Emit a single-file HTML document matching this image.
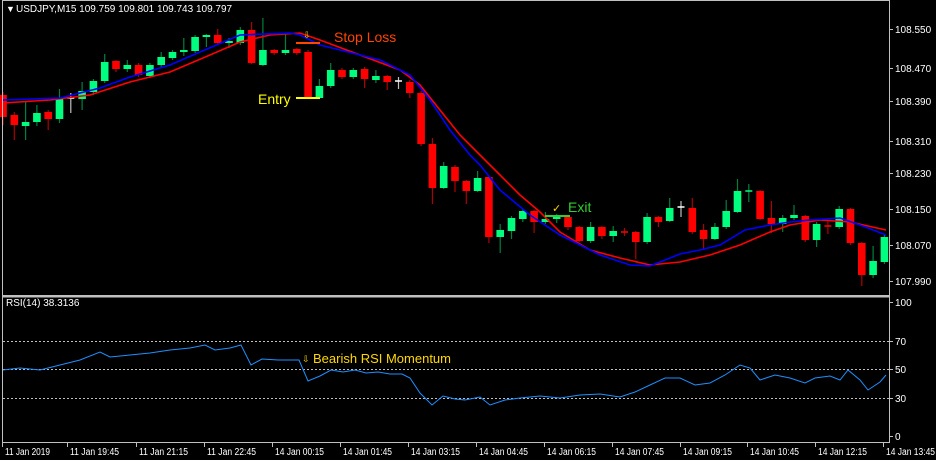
<!DOCTYPE html>
<html><head><meta charset="utf-8"><style>
html,body{margin:0;padding:0;background:#000;width:936px;height:460px;overflow:hidden}
svg{display:block}
text{font-family:"Liberation Sans",sans-serif;font-size:10px;fill:#fff}
</style></head><body>
<svg id="s" width="936" height="460" xmlns="http://www.w3.org/2000/svg">
<rect width="936" height="460" fill="#000"/>
<g id="c"></g>
<polyline fill="none" stroke="#ff0000" stroke-width="1.6" points="3,103 50,100 90,95 130,82 170,72 210,55 240,42 270,35 300,33 320,40 360,55 400,70 420,85 440,110 460,135 480,155 500,175 520,195 540,212 560,232 590,250 620,258 650,265 680,262 710,255 740,245 770,232 790,225 820,220 850,222 886,230"/>
<polyline fill="none" stroke="#0000ff" stroke-width="1.6" points="3,100 60,98 100,88 130,77 170,65 200,52 240,35 290,33 300,35 320,45 380,60 410,75 430,100 450,130 470,155 480,165 500,190 530,215 560,235 600,255 630,265 650,266 680,254 700,250 720,245 745,230 770,225 790,222 810,220 840,218 860,225 886,235"/>
<line x1="296" y1="43" x2="320" y2="43" stroke="#ff4500" stroke-width="2"/>
<line x1="296" y1="98" x2="320" y2="98" stroke="#ffff00" stroke-width="2"/>
<line x1="545" y1="216" x2="570" y2="216" stroke="#32cd32" stroke-width="2"/>
<text x="303" y="38" style="fill:#ffd700;font-size:9px">⇩</text>
<text x="334" y="42" style="fill:#ff4500;font-size:14px">Stop Loss</text>
<text x="258" y="104" style="fill:#ffff00;font-size:14px">Entry</text>
<text x="552" y="212" style="fill:#ffd700;font-size:11px">✓</text>
<text x="568" y="212" style="fill:#32cd32;font-size:14px">Exit</text>
<rect x="2.5" y="0.5" width="887" height="295" fill="none" stroke="#c0c0c0"/>
<line x1="2" y1="296.5" x2="890" y2="296.5" stroke="#c0c0c0" stroke-width="2"/>
<line x1="889.5" y1="0" x2="889.5" y2="443" stroke="#c0c0c0"/>
<line x1="2" y1="442.5" x2="890" y2="442.5" stroke="#c0c0c0"/>
<line x1="2.5" y1="296" x2="2.5" y2="443" stroke="#c0c0c0"/>
<text x="6" y="12" style="font-size:9px">▼</text>
<text x="16" y="12">USDJPY,M15  109.759 109.801 109.743 109.797</text>
<text x="6" y="306">RSI(14) 38.3136</text>
<g stroke="#c0c0c0" stroke-dasharray="2,2">
<line x1="3" y1="341.5" x2="889" y2="341.5"/><line x1="3" y1="369.5" x2="889" y2="369.5"/><line x1="3" y1="398.5" x2="889" y2="398.5"/>
</g>
<polyline fill="none" stroke="#1e90ff" stroke-width="1" points="3,370 20,368 40,370 60,365 80,360 100,352 110,357 130,355 150,353 170,350 190,348 205,345 215,350 230,348 241,345 251,365 262,359 278,360 299,360 308,381 320,376 331,370 343,372 355,370 366,373 378,372 390,374 402,374 410,378 420,393 432,405 443,396 455,399 465,400 480,397 490,405 505,400 520,398 540,396 560,398 580,395 600,394 620,397 635,392 650,385 665,378 680,378 695,385 710,383 725,375 740,365 750,368 760,380 775,375 790,378 805,383 815,378 830,376 840,380 848,370 860,380 868,390 880,382 886,375"/>
<text x="302" y="362" style="fill:#ffd700;font-size:9px">⇩</text>
<text x="313" y="363" style="fill:#ffd700;font-size:13px">Bearish RSI Momentum</text>
<g id="ax"></g>
</svg>
<script>
var C=[["r",95,117,92,125],["r",115,125,112,140],["g",122,126,102,140],["g",113,122,105,126],["r",112,119,110,130],["g",99,119,89,123],["w",98,98,93,113],["g",91,99,82,110],["g",81,92,79,95],["g",62,81,54,83],["r",61,69,60,72],["g",65,69,60,72],["r",65,75,63,77],["g",65,76,63,78],["g",57,65,52,67],["g",52,58,50,60],["g",50,52,38,56],["g",37,51,35,53],["g",35,37,34,47],["r",35,43,29,45],["g",41,43,38,48],["g",30,43,27,45],["r",30,63,22,64],["g",50,65,18,66],["r",50,53,49,55],["g",50,53,34,55],["r",49,53,48,55],["r",52,98,50,99],["g",86,98,79,99],["g",70,86,63,88],["r",70,77,68,79],["g",70,77,68,79],["r",69,79,67,88],["g",76,80,70,83],["r",76,82,75,90],["w",81,81,77,89],["r",82,93,80,98],["r",93,144,91,146],["r",144,188,138,204],["g",166,188,162,189],["r",167,181,165,192],["r",181,191,180,204],["g",178,191,171,192],["r",177,237,176,243],["g",230,237,224,253],["g",218,231,216,239],["g",211,219,209,222],["r",211,222,210,233],["g",219,222,212,224],["g",217,219,214,223],["r",217,227,216,230],["r",227,241,226,242],["g",227,241,222,243],["r",227,236,226,239],["g",231,236,226,242],["r",232,232,228,236],["r",232,242,231,259],["g",217,242,213,244],["r",217,222,216,227],["g",208,221,198,222],["w",207,207,201,217],["r",208,232,198,234],["r",230,239,224,250],["g",227,239,223,240],["g",211,227,200,229],["g",191,212,179,213],["g",191,191,184,202],["r",191,219,190,220],["r",218,224,201,233],["g",218,224,215,232],["g",215,218,205,220],["r",216,240,215,242],["g",224,240,222,247],["r",226,226,220,234],["g",209,227,206,229],["r",209,243,208,245],["r",243,275,242,286],["g",261,275,246,278],["g",237,262,235,264]];
var col={r:"#ff0000",g:"#00ff7f",w:"#ffffff"},wk={r:"#b00000",g:"#008040",w:"#c0c0c0"};
var h="";
C.forEach(function(c,i){var x=3+11.3*i,t=c[0];
 h+='<line x1="'+x+'" y1="'+c[3]+'" x2="'+x+'" y2="'+c[4]+'" stroke="'+wk[t]+'" stroke-width="1.2"/>';
 var bh=Math.max(c[2]-c[1],1.5);
 if(c[2]-c[1]<1) h+='<line x1="'+(x-3.5)+'" y1="'+c[1]+'" x2="'+(x+3.5)+'" y2="'+c[1]+'" stroke="'+col[t]+'" stroke-width="1.5"/>';
 else h+='<rect x="'+(x-3.8)+'" y="'+c[1]+'" width="7.6" height="'+bh+'" fill="'+col[t]+'"/>';
});
document.getElementById("c").innerHTML=h;
var a="";
[["108.550",29],["108.470",68],["108.390",101],["108.310",141],["108.230",173],["108.150",209],["108.070",245],["107.990",281],["100",302],["70",341],["50",369],["30",398],["0",436]].forEach(function(p){
 a+='<line x1="889" y1="'+(p[1]+.5)+'" x2="893" y2="'+(p[1]+.5)+'" stroke="#c0c0c0"/><text x="895" y="'+(p[1]+4)+'">'+p[0]+'</text>';});
[["11 Jan 2019",5],["11 Jan 19:45",70],["11 Jan 21:15",139],["11 Jan 22:45",207],["14 Jan 00:15",275],["14 Jan 01:45",343],["14 Jan 03:15",411],["14 Jan 04:45",479],["14 Jan 06:15",547],["14 Jan 07:45",615],["14 Jan 09:15",683],["14 Jan 10:45",750],["14 Jan 12:15",818],["14 Jan 13:45",886]].forEach(function(p){
 a+='<line x1="'+(p[1]-2.5)+'" y1="443" x2="'+(p[1]-2.5)+'" y2="447" stroke="#c0c0c0"/><text x="'+p[1]+'" y="455" textLength="'+(p[0].length>11?49:45)+'" lengthAdjust="spacingAndGlyphs">'+p[0]+'</text>';});
document.getElementById("ax").innerHTML=a;
</script>
</body></html>
